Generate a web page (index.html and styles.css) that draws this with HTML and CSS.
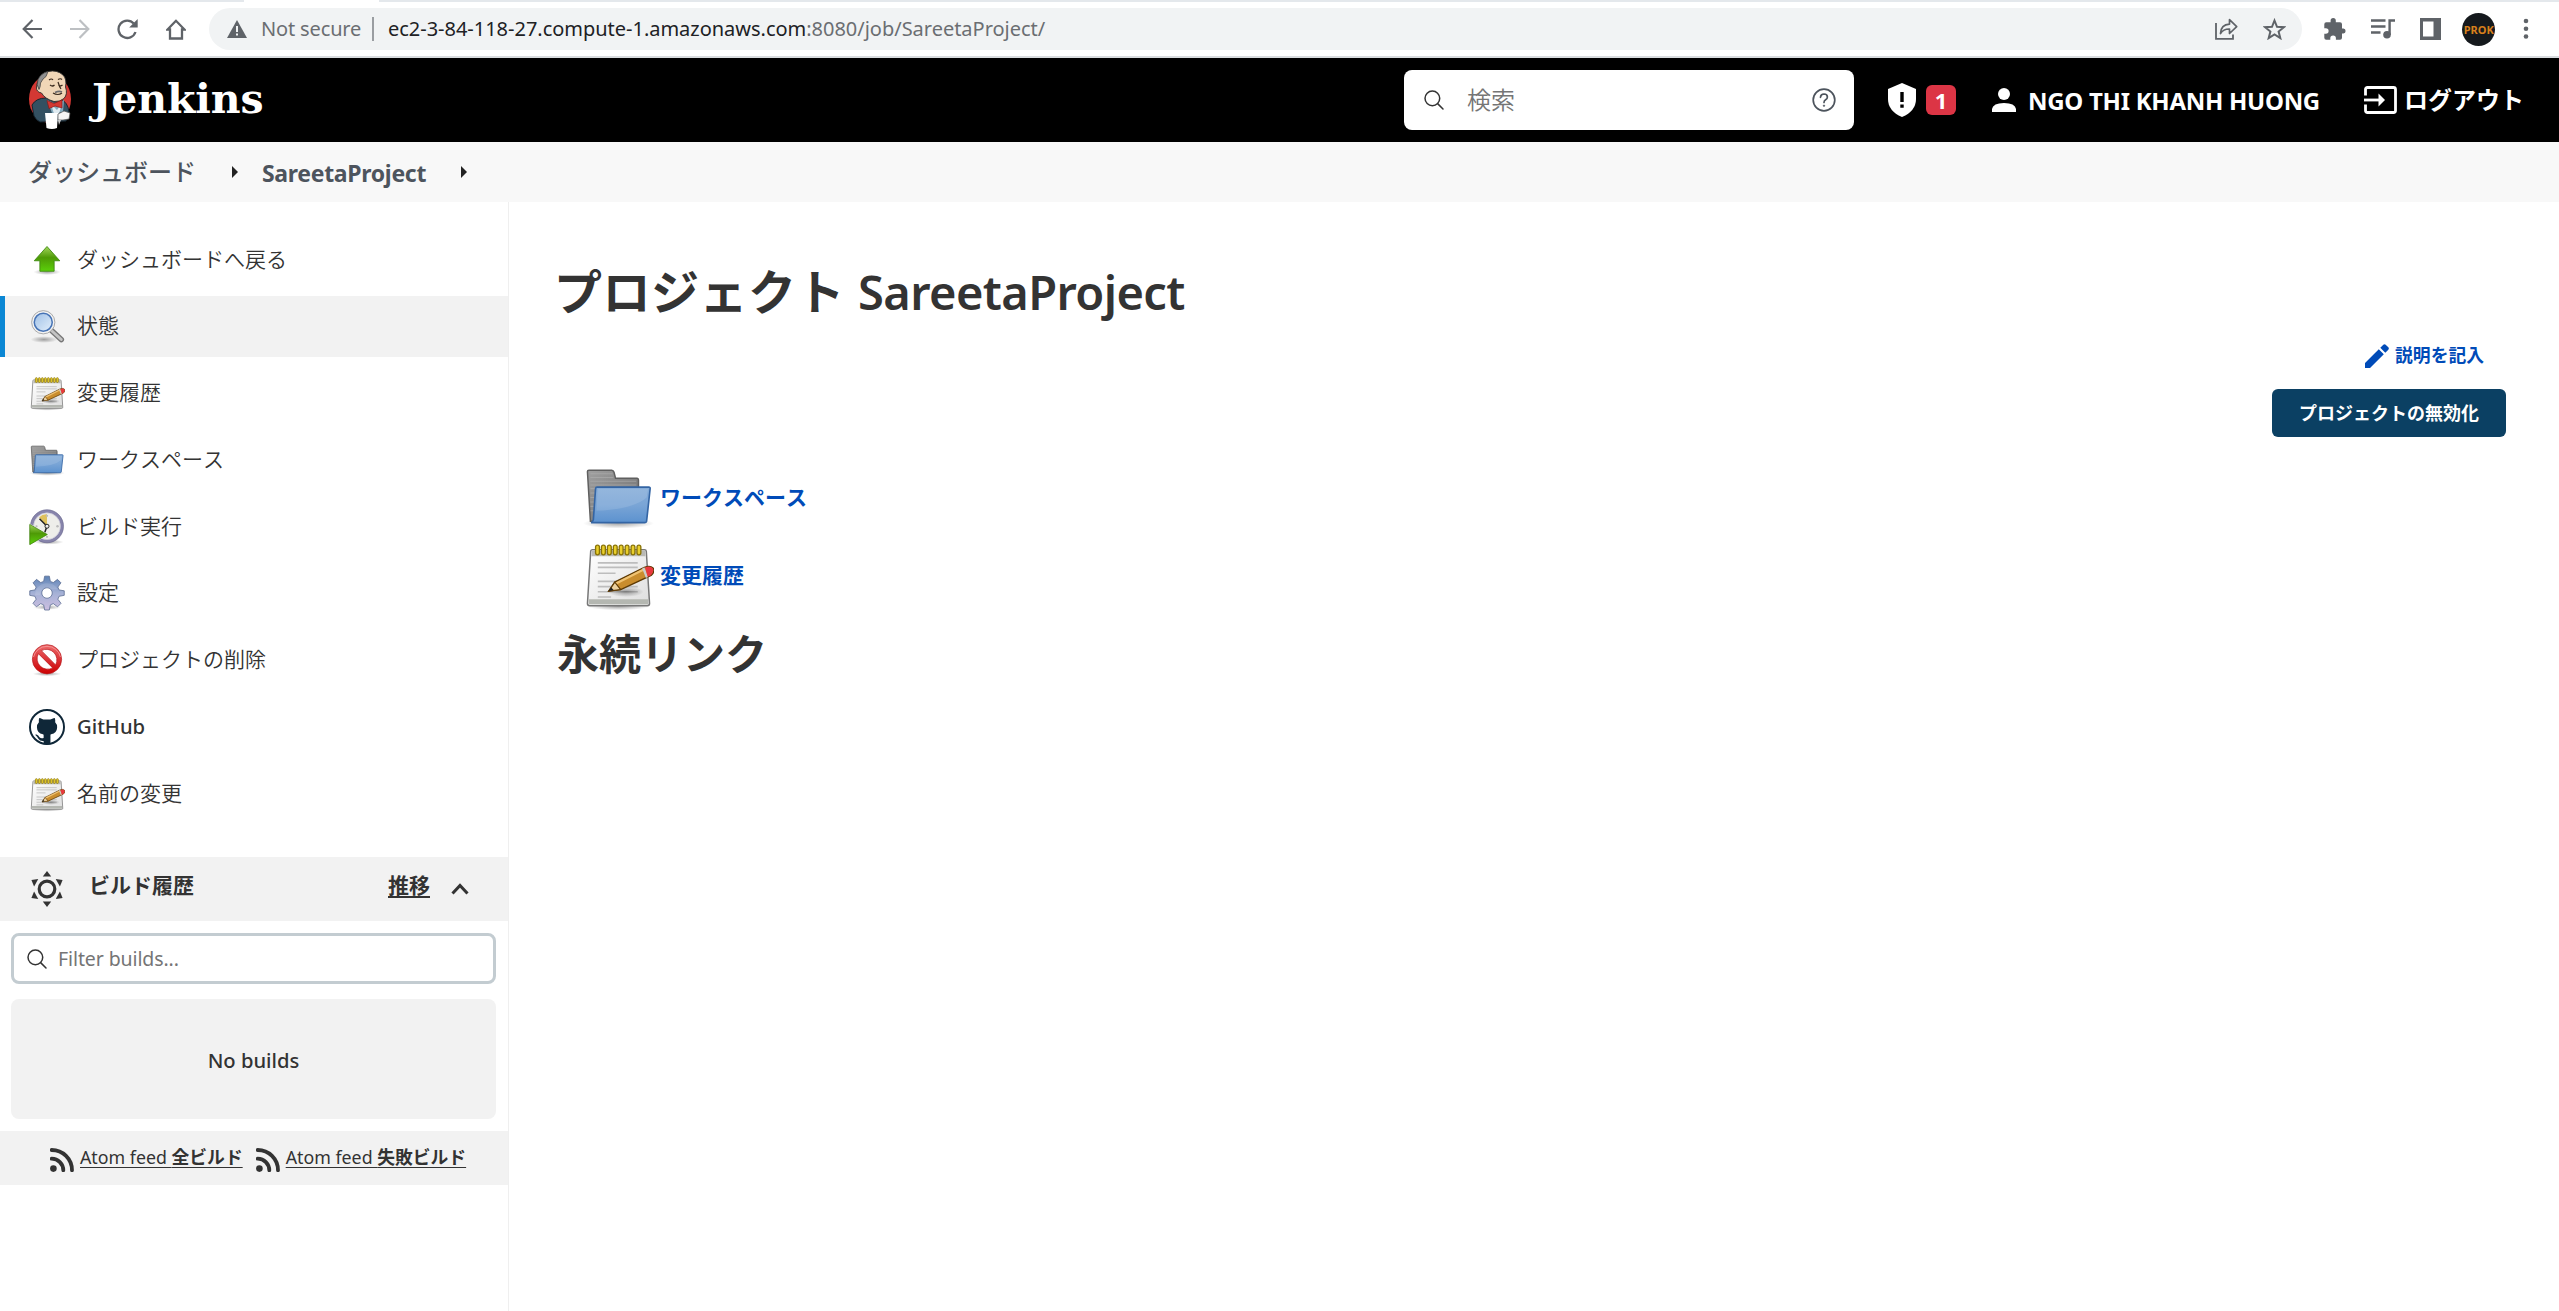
FILE: index.html
```html
<!DOCTYPE html>
<html lang="ja">
<head>
<meta charset="utf-8">
<title>SareetaProject [Jenkins]</title>
<link rel="stylesheet" href="styles.css">
</head>
<body>
<svg class="defs" width="0" height="0" aria-hidden="true">
  <defs>
    <linearGradient id="green" x1="0" y1="0" x2="0" y2="1"><stop offset="0" stop-color="#a3d65c"/><stop offset=".45" stop-color="#4e9a06"/><stop offset="1" stop-color="#5bd00a"/></linearGradient>
    <linearGradient id="blue" x1="0" y1="0" x2="0" y2="1"><stop offset="0" stop-color="#86add9"/><stop offset=".5" stop-color="#7aa5d6"/><stop offset="1" stop-color="#5c92cf"/></linearGradient>
    <linearGradient id="grey" x1="0" y1="0" x2="1" y2="1"><stop offset="0" stop-color="#a0a0a0"/><stop offset="1" stop-color="#6b6b6b"/></linearGradient>
    <linearGradient id="paper" x1="0" y1="0" x2="1" y2="1"><stop offset="0" stop-color="#fff"/><stop offset="1" stop-color="#dedede"/></linearGradient>
    <linearGradient id="lens" x1="0" y1="0" x2="1" y2="1"><stop offset="0" stop-color="#9fc0e6"/><stop offset="1" stop-color="#e3effb"/></linearGradient>
    <linearGradient id="cog" x1="0" y1="0" x2="0" y2="1"><stop offset="0" stop-color="#5d82b5"/><stop offset=".5" stop-color="#a5b1d6"/><stop offset="1" stop-color="#cdbfe0"/></linearGradient>
    <linearGradient id="red" x1="0" y1="0" x2="0" y2="1"><stop offset="0" stop-color="#ee6b6b"/><stop offset=".5" stop-color="#dc3438"/><stop offset="1" stop-color="#cc0000"/></linearGradient>
    <radialGradient id="shade"><stop offset="0" stop-color="#000" stop-opacity=".35"/><stop offset="1" stop-color="#000" stop-opacity="0"/></radialGradient>

    <symbol id="i-up" viewBox="0 0 48 48">
      <ellipse cx="24" cy="40" rx="18" ry="4" fill="url(#shade)"/>
      <path d="M24 6 41 25H33.500V39H14.500V25H7Z" fill="url(#green)" stroke="#3f8a12" stroke-width="1.200"/>
    </symbol>
    <symbol id="i-search-tango" viewBox="0 0 48 48">
      <ellipse cx="20" cy="42" rx="18" ry="4.500" fill="url(#shade)"/>
      <path d="M30 30 43 42" stroke="#777" stroke-width="7.500" stroke-linecap="round"/>
      <path d="M31 31 43 42" stroke="#c4c4c4" stroke-width="4" stroke-linecap="round"/>
      <circle cx="19" cy="19" r="15.500" fill="#f3f3f3" stroke="#a2a2a2" stroke-width="1.200"/>
      <circle cx="19" cy="19" r="12" fill="url(#lens)" stroke="#4673b5" stroke-width="2"/>
    </symbol>
    <symbol id="i-notepad" viewBox="0 0 48 48">
      <ellipse cx="24" cy="45" rx="21" ry="2.500" fill="url(#shade)"/>
      <path d="M6.500 6.500h35q1.200 0 1.300 1.200L45 43q0 1.500-1.500 1.500h-39Q3 44.500 3 43L5.200 7.700q0-1.200 1.300-1.200z" fill="url(#paper)" stroke="#777" stroke-width="1"/>
      <path d="M6 7h36l.2 4H5.800z" fill="#b9b9b4"/>
      <path d="M4 40h40v3.500H4z" fill="#b4b7b1"/>
      <path d="M10 15.500h27M10 18.500h27M10 22.500h12M10 28h27M10 31.500h27M10 35h27M10 38.500h9" stroke="#bdbdbd" stroke-width="1.100"/>
      <g fill="#e9cf2b" stroke="#8a7305" stroke-width=".9"><rect x="8.500" y="3.500" width="2.600" height="6.500" rx="1.300"/><rect x="12.500" y="3.500" width="2.600" height="6.500" rx="1.300"/><rect x="16.500" y="3.500" width="2.600" height="6.500" rx="1.300"/><rect x="20.500" y="3.500" width="2.600" height="6.500" rx="1.300"/><rect x="24.500" y="3.500" width="2.600" height="6.500" rx="1.300"/><rect x="28.500" y="3.500" width="2.600" height="6.500" rx="1.300"/><rect x="32.500" y="3.500" width="2.600" height="6.500" rx="1.300"/><rect x="36.500" y="3.500" width="2.600" height="6.500" rx="1.300"/></g>
      <ellipse cx="29" cy="35" rx="12" ry="3.500" fill="url(#shade)"/>
      <path d="M17.500 34.500 21.500 28.500 41.500 18.500Q45.500 17 47.300 19T46 24L25.500 33.500Z" fill="#c98d2e" stroke="#5f3b05" stroke-width="1"/>
      <path d="M22 29.500 41 20" stroke="#efc272" stroke-width="1.500"/>
      <path d="M17.500 34.500 21.500 28.500 25.500 33.500Z" fill="#ecd19f" stroke="#5f3b05" stroke-width=".8"/>
      <path d="M17.300 34.700 19 32 20.700 33.800Z" fill="#222"/>
      <path d="M40 19.300 41.500 18.500 44 25 42.500 25.700Z" fill="#ccc"/>
      <path d="M42 18.500Q45.500 17 47 19T45.700 24L43.700 24.900Z" fill="#e8383f"/>
    </symbol>
    <symbol id="i-folder" viewBox="0 0 48 48">
      <ellipse cx="24" cy="41.500" rx="24" ry="3.500" fill="url(#shade)"/>
      <path d="M4 5.500H19.500Q20.500 5.500 21 7L22 11H36.500Q37.500 11 37.500 12.500V40H5L3 6.500Q3 5.500 4 5.500Z" fill="url(#grey)" stroke="#5f5f5f" stroke-width="1"/>
      <path d="M5 8h15M5 10.500h15.500M5 13h31M5 15.500h31M5 18h4M5 21h4M5 24h4M5 27h4M5 30h4M5 33h4" stroke="#b0b0b0" stroke-width=".7" opacity=".6"/>
      <path d="M9.500 17H44.500Q45.500 17 45.400 18L43 40Q42.700 41 41.700 41H5.500Q6.700 40.500 7 39L8.500 18Q8.600 17 9.500 17Z" fill="url(#blue)" stroke="#3465a4" stroke-width="1.100"/>
      <path d="M10 18.300H44L43 24Q34 32 9 33Z" fill="#fff" opacity=".12"/>
    </symbol>
    <symbol id="i-clock" viewBox="0 0 48 48">
      <ellipse cx="26" cy="44" rx="20" ry="3.500" fill="url(#shade)"/>
      <circle cx="24" cy="23" r="20" fill="#eeeeea" stroke="#8784ab" stroke-width="4"/>
      <circle cx="24" cy="23" r="22" fill="none" stroke="#66648c" stroke-width=".8"/>
      <circle cx="24" cy="23" r="17.800" fill="none" stroke="#c4c3d6" stroke-width=".8"/>
      <path d="M24 23 13.500 11Q18 6.500 24 7Z" fill="#dfc15b"/>
      <g fill="#bbb"><circle cx="24" cy="9" r="1.500"/><circle cx="38" cy="23" r="1.700"/><circle cx="24" cy="37" r="1.500"/><circle cx="10" cy="23" r="1.500"/></g>
      <path d="M24 23 14 13M24 23 20 34" stroke="#222" stroke-width="2"/>
      <circle cx="24" cy="23" r="2.700" fill="#eee" stroke="#222" stroke-width="1.300"/>
      <path d="M1 21V47L24 34Z" fill="url(#green)" stroke="#fff" stroke-width="2.500"/>
      <path d="M1 20.500V47.500L24.500 34Z" fill="url(#green)" stroke="#3b7d0a" stroke-width="1"/>
    </symbol>
    <symbol id="i-gear" viewBox="0 0 48 48">
      <ellipse cx="24" cy="43" rx="18" ry="3.500" fill="url(#shade)"/>
      <path fill-rule="evenodd" d="M20.900 1.500h6.200l1.400 7 3.900 1.600 5.600-4.300 4.600 4.600-4.100 5.700 1.600 3.800 6.900 1.200v6l-6.900 1.300-1.600 3.900 4.200 5.500-4.600 4.600-5.700-4.200-3.900 1.600-1.400 6.900h-6.200l-1.400-6.900-3.900-1.600-5.700 4.200-4.600-4.600 4.200-5.500-1.600-3.900L1 27.100v-6l6.900-1.200 1.600-3.800-4.100-5.700L10 5.800l5.600 4.300 3.900-1.600zM24 17a7 7 0 1 0 0 14 7 7 0 0 0 0-14z" fill="url(#cog)" stroke="#56688f" stroke-width="1"/>
      <path d="M8 27Q9 13 22 11Q34 10 38 19Q26 19 22 17Q15 20 15 27Z" fill="#fff" opacity=".13"/>
    </symbol>
    <symbol id="i-stop" viewBox="0 0 48 48">
      <ellipse cx="24" cy="42.500" rx="19" ry="3" fill="url(#shade)"/>
      <path fill-rule="evenodd" d="M24 3.500a19.500 19.500 0 1 0 0 39 19.500 19.500 0 0 0 0-39zM12.500 15.500 31.500 34.500A14 14 0 0 1 12.500 15.500zM16.500 11.500A14 14 0 0 1 35.500 30.500Z" fill="url(#red)" stroke="#b4171b" stroke-width=".9"/>
      <path d="M6 20A18.500 18.500 0 0 1 42 20" fill="none" stroke="#f7a3a3" stroke-width="1"/>
    </symbol>
    <symbol id="i-github" viewBox="0 0 48 48">
      <circle cx="24" cy="24" r="22.700" fill="#fff" stroke="#0f2738" stroke-width="2.600"/>
      <path d="M13.500 12.200Q14 11.500 17.500 13.200 20 14.200 20.500 14H28Q29 14.100 31 13 34 11.600 34.500 12.200 35.300 14.700 34.900 17.500 37.600 20 37.500 24.500 37.200 32 29.500 33.500 28.500 33.700 28.600 35V46.500Q24 48 19.500 46.500V42.500Q14.500 43 12.500 39.500 11 36.500 8.500 34.500 8 33.500 10 34 12.500 35 14 37.500 16 39.700 19.500 38.500V35Q19.500 33.700 18.500 33.500 10.800 32 10.600 24.500 10.500 20 13.200 17.500 12.800 14.500 13.500 12.200Z" fill="#0f2738"/>
    </symbol>
    <symbol id="i-glass" viewBox="0 0 512 512">
      <path d="M221.100 64a157.100 157.100 0 1 0 157.100 157.100A157.100 157.100 0 0 0 221.100 64z" fill="none" stroke="currentColor" stroke-width="32"/>
      <path d="m338.300 338.300 109.700 109.700" stroke="currentColor" stroke-width="32" stroke-linecap="round"/>
    </symbol>
    <symbol id="i-rss" viewBox="0 0 24 24">
      <circle cx="3.400" cy="20.600" r="3.300"/>
      <path d="M1.700 10.700A11.600 11.600 0 0 1 13.300 22.300M1.700 2A20.300 20.300 0 0 1 22 22.300" fill="none" stroke="currentColor" stroke-width="3.800" stroke-linecap="round"/>
    </symbol>
  </defs>
</svg>

<header class="chrome">
  <div class="tab-strip"><div class="active-tab"></div></div>
  <div class="toolbar">
    <nav class="nav-buttons">
      <svg width="20" height="20" viewBox="0 0 20 20"><path d="M20 10H2M10.500 1 1.700 10l8.800 9" fill="none" stroke="#5f6368" stroke-width="2.200"/></svg>
      <svg width="20" height="20" viewBox="0 0 20 20"><path d="M0 10h18M9.500 1l8.800 9-8.800 9" fill="none" stroke="#bdc0c3" stroke-width="2.200"/></svg>
      <svg width="21" height="21" viewBox="0 0 21 21"><path d="M18.500 13A8.700 8.700 0 1 1 16.800 4.500" fill="none" stroke="#5f6368" stroke-width="2.300"/><path d="M20.700 0v8.500h-8.500z" fill="#5f6368"/></svg>
      <svg width="20" height="21" viewBox="0 0 20 21"><path d="M10 1.800 1.500 10.500H4V19.500H16V10.500H18.500Z" fill="none" stroke="#5f6368" stroke-width="2.300"/></svg>
    </nav>
    <div class="omnibox">
      <svg width="20" height="18" viewBox="0 0 20 18"><path d="M10 0 20 18H0Z" fill="#5f6368"/><path d="M10 6v6M10 13.500v2" stroke="#f1f3f4" stroke-width="2"/></svg>
      <span class="not-secure">Not secure</span>
      <span class="separator"></span>
      <span class="url"><b>ec2-3-84-118-27.compute-1.amazonaws.com</b>:8080/job/SareetaProject/</span>
      <span class="omnibox-actions">
        <svg width="23" height="22" viewBox="0 0 23 22"><path d="M1 5V20.800H18V16.500" fill="none" stroke="#5f6368" stroke-width="1.800"/><path d="M5.500 15.500Q6 6.500 14.500 6.200V1.700L21.700 8.700 14.500 15.500V11Q8.500 10.800 5.500 15.500Z" fill="none" stroke="#5f6368" stroke-width="1.700" stroke-linejoin="round"/></svg>
        <svg width="23" height="22" viewBox="0 0 23 22"><path d="m11.500 2.500 2.500 6.300 6.800.4-5.200 4.300 1.700 6.600-5.800-3.700-5.800 3.700 1.700-6.600L2.200 9.200l6.800-.4z" fill="none" stroke="#5f6368" stroke-width="2"/></svg>
      </span>
    </div>
    <div class="extensions">
      <svg width="22" height="22" viewBox="0 0 22 22"><path d="M19.500 10.500H18V6.200a2 2 0 0 0-2-2h-4.200V2.700a2.600 2.600 0 0 0-5.200 0v1.500H2.300a2 2 0 0 0-2 2v4h1.500a2.800 2.800 0 0 1 0 5.600H.3v4a2 2 0 0 0 2 2h4v-1.500a2.800 2.800 0 0 1 5.600 0v1.500H16a2 2 0 0 0 2-2v-4.200h1.500a2.600 2.600 0 0 0 0-5.100z" fill="#5f6368"/></svg>
      <svg width="24" height="20" viewBox="0 0 24 20"><path d="M0 1.500h14.500M0 7.500h14.500M0 13.500h9.500" stroke="#5f6368" stroke-width="2.300"/><circle cx="16" cy="15.800" r="3.800" fill="#5f6368"/><path d="M18.600 16V1.500H24" fill="none" stroke="#5f6368" stroke-width="2.400"/></svg>
      <svg width="21" height="22" viewBox="0 0 21 22"><path d="M0 0h21v22H0zM3 3.500v15h10.500v-15z" fill="#5f6368" fill-rule="evenodd"/></svg>
      <span class="avatar">PROK</span>
      <svg width="6" height="22" viewBox="0 0 6 22" fill="#5f6368"><circle cx="3" cy="3" r="2.300"/><circle cx="3" cy="10.700" r="2.300"/><circle cx="3" cy="18.500" r="2.300"/></svg>
    </div>
  </div>
</header>

<header class="page-header">
  <a class="brand">
    <svg width="44" height="60" viewBox="0 0 44 60">
      <ellipse cx="22" cy="29" rx="21" ry="24" fill="#d33833"/>
      <path d="M6 46 4 35Q8 28 18 28L32 29Q40 32 41 42L38 51 12 52Q8 50 6 46Z" fill="#335061" stroke="#16242e" stroke-width="1"/>
      <path d="M19 30 28 34 36 30 35 42 24 43Z" fill="#81a9bd"/>
      <path d="M23 34 29 40 34 33 31 44H26Z" fill="#dfeaf0"/>
      <path d="M10 12Q12 3 20 1.500 29-.5 35 5 39 9 37.500 17 40 24 36 28.500 32 32 26 31.500 17 29 13.500 23 8 22 8.500 17 9 13 10 12Z" fill="#f0d6b7" stroke="#2b2b2b" stroke-width=".9"/>
      <path d="M20 1.500Q13 3 10 9.500 8 15 11 19.500 12.500 17 12.500 13 15 8 18 6.500Z" fill="#8f8f8f" stroke="#333" stroke-width=".7"/>
      <path d="M21 10q2.500-2 4 0M30 9.500q2.500-1.500 4 0M22 15q2.500 2 4.500 0M30.500 15q2 1.700 4 0M30 12q1.500 5 3 7M25 23q5 3 9 0" fill="none" stroke="#3a2a1e" stroke-width="1.200"/>
      <path d="M27 22.500q4-2 7-.5" fill="none" stroke="#6d6b6d" stroke-width="1.600"/>
      <path d="M19 30.500 26 33.500 34 30V38L27 36 21 38.500Z" fill="#d33833" stroke="#8b1512" stroke-width=".7"/>
      <path d="M17 43H30L29 58Q24 60 18.500 58Z" fill="#fff"/>
      <path d="M30 44 36 41 42 43 41 49 35 50 30 50Z" fill="#f5f5f5" stroke="#555" stroke-width=".7"/>
      <path d="M30 50h3l-2 5" fill="#ccc"/>
    </svg>
    <span class="wordmark">Jenkins</span>
  </a>
  <div class="search-box">
    <svg class="glass" width="24" height="24"><use href="#i-glass"/></svg>
    <span>検索</span>
    <svg width="24" height="24" viewBox="0 0 24 24" fill="none" stroke="#4d545d" stroke-width="1.700"><circle cx="12" cy="12" r="10.800"/><path d="M8.500 9.300q.2-3.300 3.500-3.300 3.400.1 3.400 3 0 1.700-1.800 2.800-1.600 1-1.600 2.700" stroke-linecap="round"/><circle cx="12" cy="17.700" r=".7" fill="#4d545d" stroke-width=".8"/></svg>
  </div>
  <div class="alerts">
    <svg width="28" height="34" viewBox="0 0 28 34"><path d="M14 0 28 6V16Q28 28 14 34 0 28 0 16V6Z" fill="#fff"/><path d="M14 9v10M14 21.500v3.300" stroke="#000" stroke-width="3.400"/></svg>
    <span class="badge">1</span>
  </div>
  <a class="user">
    <svg width="24" height="24" viewBox="0 0 24 24" fill="#fff"><circle cx="12" cy="6" r="6"/><path d="M0 24v-3Q1 15 12 15t12 6v3z"/></svg>
    <span>NGO THI KHANH HUONG</span>
  </a>
  <a class="logout">
    <svg width="33" height="28" viewBox="0 0 33 28"><path d="M1.500 9.500V3.500Q1.500 1.500 3.500 1.500H29.500Q31.500 1.500 31.500 3.500V24.500Q31.500 26.500 29.500 26.500H3.500Q1.500 26.500 1.500 24.500V18.500" fill="none" stroke="#fff" stroke-width="2.800"/><path d="M0 14h18" stroke="#fff" stroke-width="2.800"/><path d="M14.500 7.500 21 14l-6.500 6.500z" fill="#fff"/></svg>
    <span>ログアウト</span>
  </a>
</header>

<nav class="breadcrumbs">
  <a class="crumb-home">ダッシュボード</a>
  <i class="caret"></i>
  <a class="crumb-job">SareetaProject</a>
  <i class="caret"></i>
</nav>

<div class="page-body">
  <aside class="side-panel">
    <nav class="tasks">
      <a class="task"><svg><use href="#i-up"/></svg><span>ダッシュボードへ戻る</span></a>
      <a class="task active"><svg><use href="#i-search-tango"/></svg><span>状態</span></a>
      <a class="task"><svg><use href="#i-notepad"/></svg><span>変更履歴</span></a>
      <a class="task"><svg><use href="#i-folder"/></svg><span>ワークスペース</span></a>
      <a class="task"><svg><use href="#i-clock"/></svg><span>ビルド実行</span></a>
      <a class="task"><svg><use href="#i-gear"/></svg><span>設定</span></a>
      <a class="task"><svg><use href="#i-stop"/></svg><span>プロジェクトの削除</span></a>
      <a class="task github"><svg><use href="#i-github"/></svg><span>GitHub</span></a>
      <a class="task"><svg><use href="#i-notepad"/></svg><span>名前の変更</span></a>
    </nav>

    <section class="history">
      <div class="history-header">
        <svg width="36" height="36" viewBox="0 0 36 36" fill="#333"><circle cx="18" cy="18" r="7.800" fill="none" stroke="#333" stroke-width="3.200"/><path id="ray" d="M18 0 22.200 5.500H13.800Z"/><use href="#ray" transform="rotate(60 18 18)"/><use href="#ray" transform="rotate(120 18 18)"/><use href="#ray" transform="rotate(180 18 18)"/><use href="#ray" transform="rotate(240 18 18)"/><use href="#ray" transform="rotate(300 18 18)"/></svg>
        <span class="history-title">ビルド履歴</span>
        <a class="trend">推移</a>
        <svg width="18" height="12" viewBox="0 0 18 12"><path d="m1.500 10.500 7.500-8 7.500 8" fill="none" stroke="#333" stroke-width="3"/></svg>
      </div>
      <div class="filter">
        <svg class="glass" width="24" height="24"><use href="#i-glass"/></svg>
        <span>Filter builds...</span>
      </div>
      <div class="no-builds">No builds</div>
      <div class="feeds">
        <a><svg><use href="#i-rss"/></svg><span>Atom feed <b>全ビルド</b></span></a>
        <a><svg><use href="#i-rss"/></svg><span>Atom feed <b>失敗ビルド</b></span></a>
      </div>
    </section>
  </aside>

  <main class="main-panel">
    <h1>プロジェクト <span>SareetaProject</span></h1>
    <div class="actions">
      <a class="edit"><svg width="24" height="24" viewBox="0 0 24 24" fill="#004bb8"><path d="M0 19V24H5L18.800 10.200 13.800 5.200ZM15.300 3.700 18.300.7Q19.500-.4 20.700.7L23.300 3.300Q24.400 4.500 23.300 5.700L20.300 8.700Z"/></svg>説明を記入</a>
      <button class="disable" type="button">プロジェクトの無効化</button>
    </div>
    <div class="links">
      <a><svg><use href="#i-folder"/></svg>ワークスペース</a>
      <a><svg><use href="#i-notepad"/></svg>変更履歴</a>
    </div>
    <h2>永続リンク</h2>
  </main>
</div>
</body>
</html>
```
FILE: styles.css
```css
* {
  box-sizing: border-box;
}

body {
  margin: 0;
  height: 1311px;
  display: flex;
  flex-direction: column;
  overflow: hidden;
  background: #fff;
  color: #333;
  font-family: "Noto Sans", "Noto Sans CJK JP", sans-serif;
  font-size: 21px;
  font-kerning: none;
  line-height: 1;
  white-space: nowrap;
}

svg {
  display: block;
  flex: none;
}

.defs {
  position: absolute;
}

/* Browser chrome */
.chrome {
  height: 58px;
  flex: none;
  border-bottom: 2px solid #d9dcdf;
}

.tab-strip {
  height: 2px;
  padding-left: 244px;
  background: #e4e8ec;
}

.active-tab {
  width: 135px;
  height: 2px;
  background: #fff;
}

.toolbar {
  height: 54px;
  padding-right: 30px;
  display: flex;
  align-items: center;
}

.nav-buttons {
  width: 209px;
  padding-left: 22px;
  display: flex;
  align-items: center;
  gap: 27.600px;
}

.omnibox {
  width: 2093px;
  height: 42px;
  padding: 0 16px 0 18px;
  display: flex;
  align-items: center;
  border-radius: 21px;
  background: #f1f3f4;
  color: #6b6e72;
  font-size: 20px;
  font-kerning: normal;
}

.not-secure {
  margin-left: 14px;
  width: 111px;
  letter-spacing: -0.15px;
}

.separator {
  width: 2px;
  height: 24px;
  margin-right: 14px;
  background: #9a9da1;
}

.url {
  letter-spacing: -0.02px;
}

.url b {
  font-weight: 400;
  color: #202124;
}

.omnibox-actions {
  margin-left: auto;
  display: flex;
  gap: 25px;
}

.extensions {
  flex: 1;
  margin-left: 22px;
  display: flex;
  align-items: center;
  justify-content: space-between;
}

.avatar {
  width: 33px;
  height: 33px;
  margin: 0 3px 0 -3px;
  border-radius: 50%;
  background: #15191d;
  color: #d8801c;
  font-size: 11px;
  font-weight: 700;
  line-height: 33px;
  text-align: center;
}

/* Jenkins header */
.page-header {
  height: 84px;
  flex: none;
  padding: 0 36px 0 28px;
  display: flex;
  align-items: center;
  background: #000;
  color: #fff;
}

.brand {
  flex: 1;
  display: flex;
  align-items: center;
  gap: 20px;
}

.wordmark {
  margin-top: -3px;
  font: 700 41px/60px "DejaVu Serif", serif;
  letter-spacing: -0.1px;
}

.search-box {
  width: 450px;
  height: 60px;
  padding: 0 18px 0 18px;
  display: flex;
  align-items: center;
  border-radius: 8px;
  background: #fff;
  color: #757575;
  font-size: 24px;
  font-weight: 350;
}

.search-box span {
  flex: 1;
  margin-left: 21px;
}

.glass {
  color: #333;
}

.alerts {
  margin-left: 34px;
  display: flex;
  align-items: center;
  gap: 10px;
}

.badge {
  width: 30px;
  height: 30px;
  border-radius: 6px;
  background: #dc3545;
  font-size: 22px;
  font-weight: 700;
  line-height: 30px;
  text-align: center;
}

.user {
  margin-left: 36px;
  display: flex;
  align-items: center;
  gap: 12px;
  width: 336px;
  font-size: 24px;
  font-weight: 700;
  font-kerning: normal;
  letter-spacing: -0.28px;
}

.user span {
  padding-top: 1px;
}

.logout {
  margin-left: 36px;
  display: flex;
  align-items: center;
  gap: 7px;
  width: 159px;
  font-size: 24px;
  font-weight: 600;
}

/* Breadcrumbs */
.breadcrumbs {
  height: 60px;
  flex: none;
  padding-left: 28px;
  display: flex;
  align-items: center;
  background: #f8f8f8;
  color: #4d545d;
  font-size: 24px;
}

.crumb-home {
  width: 204px;
  font-weight: 500;
}

.crumb-job {
  width: 170px;
  margin-left: 24px;
  padding-top: 2px;
  font-size: 23px;
  font-weight: 700;
  font-kerning: normal;
  letter-spacing: -0.31px;
}

.caret {
  border: 6px solid transparent;
  border-left-color: #222;
  border-right-width: 0;
}

.crumb-job + .caret {
  margin-left: 29px;
}

/* Side panel */
.page-body {
  flex: 1;
  display: flex;
}

.side-panel {
  width: 509px;
  border-right: 1px solid #efefef;
}

.tasks {
  height: 655px;
  padding-top: 27.250px;
  display: flex;
  flex-direction: column;
  gap: 6px;
}

.task {
  height: 60.750px;
  flex: none;
  padding-left: 29px;
  display: flex;
  align-items: center;
  gap: 12px;
  font-weight: 350;
}

.task svg {
  width: 36px;
  height: 36px;
}

.task span {
  padding-bottom: 1px;
}

.task.active {
  padding-left: 24px;
  border-left: 5px solid #0b87d4;
  background: #f2f2f2;
}

.task.github {
  font-size: 20.200px;
  font-weight: 500;
}

.history-header {
  height: 64px;
  padding: 0 39px 0 29px;
  display: flex;
  align-items: center;
  background: #f2f2f2;
}

.history-title {
  flex: 1;
  margin-left: 24px;
  font-weight: 600;
  padding-bottom: 7px;
}

.trend {
  margin-right: 21px;
  padding-bottom: 7px;
  font-weight: 600;
  text-decoration: underline;
  text-decoration-thickness: 2px;
  text-underline-offset: 3px;
}

.filter {
  width: 485px;
  height: 51px;
  margin: 12px 0 15px 11px;
  padding-left: 11px;
  display: flex;
  align-items: center;
  gap: 9px;
  border: 3px solid #c3ccd1;
  border-radius: 8px;
  color: #757575;
  font-size: 19.500px;
  letter-spacing: -0.100px;
}

.no-builds {
  width: 485px;
  height: 120px;
  margin: 0 0 12px 11px;
  border-radius: 8px;
  background: #f2f2f2;
  font-size: 20.200px;
  font-weight: 500;
  line-height: 122px;
  text-align: center;
}

.feeds {
  height: 54px;
  padding: 0 0 0 50px;
  display: flex;
  align-items: center;
  gap: 13px;
  background: #f2f2f2;
  font-size: 17.800px;
}

.feeds a {
  display: flex;
  align-items: center;
  gap: 6px;
}

.feeds svg {
  width: 24px;
  height: 24px;
  margin-top: 4px;
  fill: #333;
}

.feeds span {
  padding-bottom: 1px;
  text-decoration: underline;
  text-underline-offset: 3px;
}

.feeds b {
  font-weight: 600;
}

/* Main panel */
.main-panel {
  flex: 1;
  padding: 65px 53px 0 48px;
  display: flex;
  flex-direction: column;
}

h1 {
  margin: 0 0 0 -3px;
  font-size: 48px;
  font-weight: 600;
  line-height: 50px;
  letter-spacing: 0.500px;
}

h1 span {
  font-size: 47px;
  font-kerning: normal;
  letter-spacing: -0.60px;
}

.actions {
  display: flex;
  flex-direction: column;
  align-items: flex-end;
  gap: 21px;
  margin-top: 27px;
  font-size: 18px;
}

.edit {
  display: flex;
  align-items: center;
  gap: 6px;
  margin-right: 22px;
  color: #004bb8;
  font-size: 17.800px;
  font-weight: 700;
}

.disable {
  width: 234px;
  height: 48px;
  padding: 0;
  border: 0;
  border-radius: 6px;
  background: #0b4063;
  color: #fff;
  font: inherit;
  font-kerning: none;
  font-weight: 700;
}

.links {
  margin-top: 21px;
  padding-left: 26px;
}

.links a {
  height: 78px;
  display: flex;
  align-items: center;
  gap: 6px;
  color: #004bb8;
  font-weight: 600;
}

.links svg {
  width: 71px;
  height: 71px;
}

h2 {
  margin: 15px 0 0;
  font-size: 42px;
  font-weight: 600;
  line-height: 50px;
}
```
